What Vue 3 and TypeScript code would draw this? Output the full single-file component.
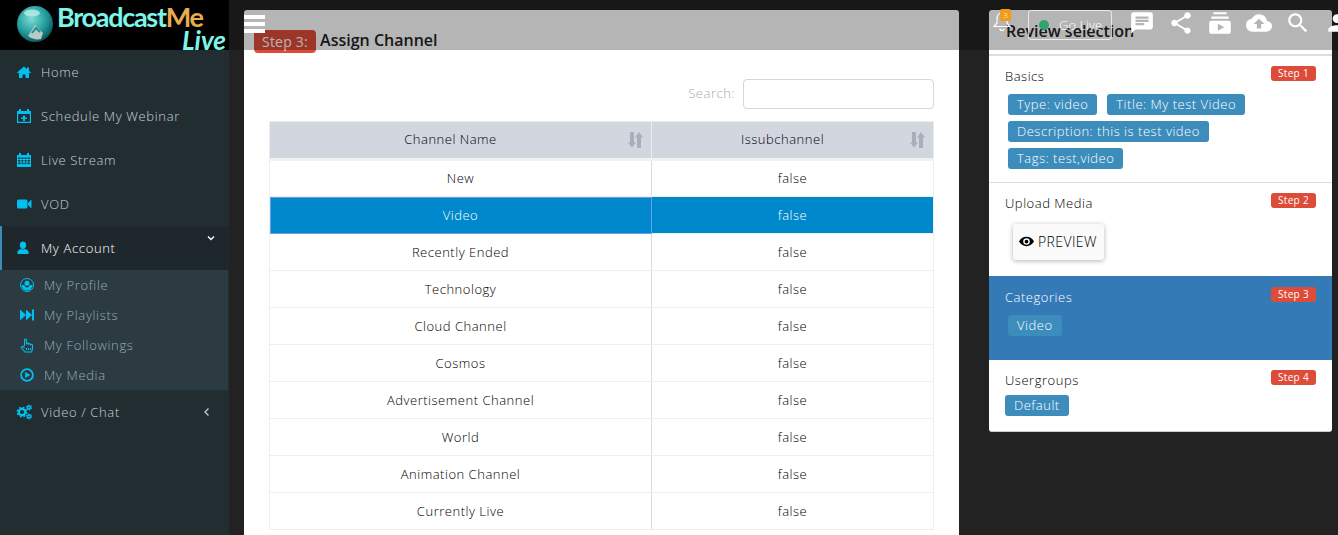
<script setup lang="ts">
const menu = [
  { label: 'Home', icon: 'home' },
  { label: 'Schedule My Webinar', icon: 'calplus' },
  { label: 'Live Stream', icon: 'cal' },
  { label: 'VOD', icon: 'video' },
]
const subMenu = [
  { label: 'My Profile', icon: 'profile' },
  { label: 'My Playlists', icon: 'forward' },
  { label: 'My Followings', icon: 'hand' },
  { label: 'My Media', icon: 'play' },
]
const channels = [
  'New',
  'Video',
  'Recently Ended',
  'Technology',
  'Cloud Channel',
  'Cosmos',
  'Advertisement Channel',
  'World',
  'Animation Channel',
  'Currently Live',
]
const basics = ['Type: video', 'Title: My test Video', 'Description: this is test video', 'Tags: test,video']
</script>

<template>
  <div class="page">
    <aside class="sidebar">
      <div class="logo">
        <svg class="globe" width="36" height="36" viewBox="0 0 36 36">
          <defs>
            <radialGradient id="gl" cx="40%" cy="35%" r="70%">
              <stop offset="0" stop-color="#7fdcd6" />
              <stop offset="0.6" stop-color="#1f9c9c" />
              <stop offset="1" stop-color="#0c4f55" />
            </radialGradient>
          </defs>
          <circle cx="18" cy="18" r="18" fill="url(#gl)" />
          <path d="M11 30l7-11 8 8-2 6c-4 1-9 0-13-3z" fill="#b9c9c6" />
          <path d="M15 27l4-5 4 4" fill="none" stroke="#1f8f90" stroke-width="2" />
          <ellipse cx="15" cy="7" rx="8" ry="3.5" fill="#c9f3ee" opacity=".7" />
        </svg>
        <div class="logo-text">
          <div class="logo-top">Broadcast<span class="logo-me">Me</span></div>
          <div class="logo-live">Live</div>
        </div>
      </div>
      <nav class="menu">
        <a v-for="m in menu" :key="m.label" class="item">
          <svg class="ico" viewBox="1 1 14 14">
            <path v-if="m.icon === 'home'" d="M8 2.500 1 8.500l.8 1L3 8.500V14h3.500v-3.500h3V14H13V8.500l1.200 1 .8-1-2-1.700V3.500h-2v1.600z" />
            <path v-else-if="m.icon === 'calplus'" fill-rule="evenodd" d="M3 1h2v2h6V1h2v2h2v12H1V3h2zm-.8 5v7.800h11.600V6zM7 7.500h2v2h2v1.500H9v2H7v-2H5V9.500h2z" />
            <path v-else-if="m.icon === 'cal'" fill-rule="evenodd" d="M3 1h2v2h6V1h2v2h2v12H1V3h2zm-.8 4.500V7h2.300V5.500zm3.300 0V7h2V5.500zm3 0V7h2V5.500zm3 0V7h2.300V5.500zm-9.300 2.500v1.500h2.300V8zm3.300 0v1.500h2V8zm3 0v1.500h2V8zm3 0v1.500h2.300V8zm-9.300 2.500V12h2.300v-1.500zm3.300 0V12h2v-1.500zm3 0V12h2v-1.500zm3 0V12h2.300v-1.500z" />
            <path v-else d="M2.500 3.500h7.500a1.500 1.500 0 0 1 1.500 1.500v6a1.500 1.500 0 0 1-1.500 1.500H2.500A1.500 1.500 0 0 1 1 11V5a1.500 1.500 0 0 1 1.500-1.500zM12 7l3-3h.500v8H15l-3-3z" />
          </svg>
          <span>{{ m.label }}</span>
        </a>
        <a class="item active">
          <svg class="ico" viewBox="1 1 14 14">
            <path d="M7 1.500c2 0 3.200 1.500 3.200 3.500S9 9 7 9 3.800 7 3.800 5 5 1.500 7 1.500zM1.500 14v-2c0-1.500 1.500-2.500 3.500-3 .8.600 3.200.600 4 0 2 .5 3.500 1.500 3.500 3v2z" />
          </svg>
          <span>My Account</span>
          <svg class="chev down" width="10" height="10" viewBox="0 0 10 10">
            <path d="M2 3.500 5 6.500 8 3.500" fill="none" stroke="#fff" stroke-width="1.400" />
          </svg>
        </a>
        <div class="sub">
          <a v-for="s in subMenu" :key="s.label" class="sub-item">
            <svg class="ico" viewBox="1 1 14 14">
              <template v-if="s.icon === 'profile'">
                <circle cx="8" cy="8" r="6.500" fill="none" stroke="#00c0ef" stroke-width="1" />
                <circle cx="8" cy="6.200" r="2.500" />
                <path d="M2.500 8h2.700c.6 1.600 1.700 2.400 2.800 2.400s2.200-.8 2.800-2.400h2.700a5.500 5.500 0 0 1-11 0z" />
              </template>
              <path v-else-if="s.icon === 'forward'" d="M1 2.500l6 5.500V2.500l6 5.500V2.500h2v11h-2V8l-6 5.500V8l-6 5.500z" />
              <path v-else-if="s.icon === 'hand'" fill="none" stroke="#00c0ef" stroke-width="1.100" d="M5.500 9V3a1 1 0 0 1 2 0v4.500m0-.5a1 1 0 0 1 2 0v1m0-.5a1 1 0 0 1 2 0v1m0-.2a1 1 0 0 1 2 0V12l-1 3H6l-3.500-4c-.8-1 .5-2.200 1.500-1.500L5.500 11M7.500 11v2M9.500 11v2M11.500 11v2" />
              <path v-else fill-rule="evenodd" d="M8 1.200a6.800 6.800 0 1 1 0 13.600A6.800 6.800 0 0 1 8 1.200zm0 1.800a5 5 0 1 0 0 10A5 5 0 0 0 8 3zM6.200 5l5 3-5 3z" />
            </svg>
            <span>{{ s.label }}</span>
          </a>
        </div>
        <a class="item last">
          <svg class="ico gears" viewBox="1 1 14 14">
            <circle class="gear-ring" cx="6" cy="8" r="3.200" />
            <circle class="gear-teeth" cx="6" cy="8" r="4.600" />
            <circle class="gear-ring small" cx="13" cy="3.500" r="1.500" />
            <circle class="gear-teeth small" cx="13" cy="3.500" r="2.500" />
            <circle class="gear-ring small" cx="13" cy="12.500" r="1.500" />
            <circle class="gear-teeth small" cx="13" cy="12.500" r="2.500" />
          </svg>
          <span>Video / Chat</span>
          <svg class="chev" width="10" height="10" viewBox="0 0 10 10">
            <path d="M6.500 1.500 3 5l3.500 3.500" fill="none" stroke="#b8c7ce" stroke-width="1.400" />
          </svg>
        </a>
      </nav>
    </aside>

    <main class="content">
      <section class="card wizard">
        <h3 class="card-title"><span class="step-tag">Step 3:</span> Assign Channel</h3>
        <div class="search">
          <label>Search:</label>
          <input type="text" />
        </div>
        <table class="grid">
          <thead>
            <tr>
              <th>
                Channel Name
                <svg class="sort" width="15" height="16" viewBox="0 0 15 16"><path d="M2 0h4v10.500h2L4 15.500 0 10.500h2zM11 0l4 5.500h-2V16H9V5.500H7z" /></svg>
              </th>
              <th>
                Issubchannel
                <svg class="sort" width="15" height="16" viewBox="0 0 15 16"><path d="M2 0h4v10.500h2L4 15.500 0 10.500h2zM11 0l4 5.500h-2V16H9V5.500H7z" /></svg>
              </th>
            </tr>
          </thead>
          <tbody>
            <tr v-for="c in channels" :key="c" :class="{ picked: c === 'Video' }">
              <td>{{ c }}</td>
              <td>false</td>
            </tr>
          </tbody>
        </table>
      </section>

      <section class="card review">
        <h3 class="review-title">Review selection</h3>
        <div class="group">
          <span class="step">Step 1</span>
          <h4>Basics</h4>
          <div class="tags indent">
            <span v-for="b in basics" :key="b" class="tag">{{ b }}</span>
          </div>
        </div>
        <div class="group upload">
          <span class="step">Step 2</span>
          <h4>Upload Media</h4>
          <button class="preview">
            <svg width="15" height="15" viewBox="0 0 16 16"><path fill-rule="evenodd" d="M8 3c3.500 0 6.500 2.200 8 5-1.500 2.800-4.500 5-8 5s-6.500-2.200-8-5c1.500-2.800 4.500-5 8-5zm0 1.500a3.500 3.500 0 1 0 0 7 3.500 3.500 0 0 0 0-7zM8 6a2 2 0 1 1 0 4 2 2 0 0 1 0-4z" /></svg>
            PREVIEW
          </button>
        </div>
        <div class="group current">
          <span class="step">Step 3</span>
          <h4>Categories</h4>
          <div class="tags indent"><span class="tag">Video</span></div>
        </div>
        <div class="group last-group">
          <span class="step">Step 4</span>
          <h4>Usergroups</h4>
          <div class="tags"><span class="tag">Default</span></div>
        </div>
      </section>
    </main>

    <header class="topbar">
      <div class="burger"><i></i><i></i><i></i></div>
      <div class="top-right">
        <div class="bell">
          <svg width="18" height="22" viewBox="0 0 18 22"><path d="M9 3c3.500 0 5 2.800 5 6v4l3 3.500H1L4 13V9c0-3.200 1.500-6 5-6zM7 18.500a2 2 0 0 0 4 0" fill="none" stroke="#fff" stroke-width="1.200" /></svg>
          <span class="badge">3</span>
        </div>
        <button class="golive"><i class="dot"></i>Go Live</button>
        <svg class="t-ico" width="26" height="26" viewBox="0 0 24 24"><path fill-rule="evenodd" d="M20 2H4c-1.100 0-2 .9-2 2v18l4-4h14c1.100 0 2-.9 2-2V4c0-1.100-.9-2-2-2zM6 9h12v2H6zm8 5H6v-2h8zm4-6H6V6h12z" fill="#fff" /></svg>
        <svg class="t-ico" width="26" height="26" viewBox="0 0 24 24"><path d="M18 16.080c-.76 0-1.440.3-1.960.77L8.910 12.700c.05-.23.090-.46.090-.7s-.04-.47-.09-.7l7.050-4.110c.54.5 1.250.81 2.040.81 1.660 0 3-1.340 3-3s-1.340-3-3-3-3 1.340-3 3c0 .24.040.47.090.7L8.040 9.810C7.500 9.310 6.790 9 6 9c-1.660 0-3 1.340-3 3s1.340 3 3 3c.79 0 1.500-.31 2.040-.81l7.120 4.160c-.05.21-.08.43-.08.65 0 1.610 1.310 2.920 2.920 2.920 1.610 0 2.920-1.310 2.920-2.920s-1.310-2.920-2.920-2.920z" fill="#fff" /></svg>
        <svg class="t-ico" width="26" height="26" viewBox="0 0 24 24"><path fill-rule="evenodd" d="M20 8H4V6h16v2zm-2-6H6v2h12V2zm4 10v8c0 1.100-.9 2-2 2H4c-1.100 0-2-.9-2-2v-8c0-1.100.9-2 2-2h16c1.100 0 2 .9 2 2zm-6 4l-6-3.270v6.530L16 16z" fill="#fff" /></svg>
        <svg class="t-ico" width="26" height="26" viewBox="0 0 24 24"><path d="M19.350 10.040C18.670 6.590 15.640 4 12 4 9.110 4 6.600 5.640 5.350 8.040 2.340 8.360 0 10.910 0 14c0 3.310 2.690 6 6 6h13c2.760 0 5-2.240 5-5 0-2.640-2.050-4.780-4.650-4.960zM14 13v4h-4v-4H7l5-5 5 5z" fill="#fff" /></svg>
        <svg class="t-ico" width="26" height="26" viewBox="0 0 24 24"><path d="M15.500 14h-.79l-.28-.27C15.410 12.590 16 11.110 16 9.500 16 5.910 13.090 3 9.500 3S3 5.910 3 9.500 5.910 16 9.500 16c1.610 0 3.090-.59 4.230-1.570l.27.28v.79l5 4.990L20.490 19zm-6 0C7.010 14 5 11.990 5 9.500S7.010 5 9.500 5 14 7.010 14 9.500 11.990 14 9.500 14z" fill="#fff" /></svg>
        <svg class="t-ico" width="26" height="26" viewBox="0 0 24 24"><path d="M12 12c2.210 0 4-1.790 4-4s-1.790-4-4-4-4 1.790-4 4 1.790 4 4 4zm0 2c-2.670 0-8 1.340-8 4v2h16v-2c0-2.660-5.330-4-8-4z" fill="#fff" /></svg>
      </div>
    </header>
  </div>
</template>

<style>
html, body {
  margin: 0;
  height: 100%;
  overflow: hidden;
  background: #222;
}
</style>

<style scoped>
* {
  box-sizing: border-box;
}
.page {
  position: relative;
  display: flex;
  width: 1338px;
  height: 535px;
  overflow: hidden;
  background: #222;
  font-family: "Open Sans", "Liberation Sans", sans-serif;
  font-size: 13px;
  font-weight: 300;
  letter-spacing: 0.52px;
  color: #333;
}
.sidebar {
  width: 229px;
  flex: none;
  background: #222d32;
}
.menu {
  letter-spacing: 0.65px;
}
.logo {
  display: flex;
  height: 50px;
  padding: 6px 0 0 17px;
  background: #000;
}
.globe {
  flex: none;
}
.logo-text {
  width: 169px;
  margin-left: 4px;
  flex: none;
  font-family: Lato, "Liberation Sans", sans-serif;
  font-weight: 700;
  letter-spacing: 0;
  color: #7df5e8;
}
.logo-top {
  margin-top: -3px;
  font-size: 27px;
  line-height: 28px;
  letter-spacing: -1.3px;
  white-space: nowrap;
}
.logo-me {
  color: #e8ac50;
}
.logo-live {
  margin-top: -1px;
  text-align: right;
  font-size: 26px;
  line-height: 20px;
  font-style: italic;
}
.item {
  position: relative;
  display: flex;
  align-items: center;
  height: 44px;
  padding-left: 17px;
  color: #c5d2d8;
}
.item.active {
  background: #1e282c;
  color: #fff;
  border-left: 2px solid #3c8dbc;
  padding-left: 15px;
}
.ico {
  flex: none;
  width: 14px;
  height: 14px;
  margin-right: 10px;
  fill: #00c0ef;
  overflow: visible;
}
.gear-ring {
  fill: none;
  stroke: #00c0ef;
  stroke-width: 2.200;
}
.gear-ring.small {
  stroke-width: 1.400;
}
.gear-teeth {
  fill: none;
  stroke: #00c0ef;
  stroke-width: 1.600;
  stroke-dasharray: 2 1.610;
}
.gear-teeth.small {
  stroke-width: 1.100;
  stroke-dasharray: 1.300 1.320;
}
.chev {
  position: absolute;
  right: 17px;
  top: 17px;
}
.chev.down {
  top: 7px;
  right: 13px;
}
.sub {
  background: #2c3b41;
  width: 228px;
}
.sub-item {
  display: flex;
  align-items: center;
  height: 30px;
  padding-left: 20px;
  color: #94adb8;
}
.content {
  flex: 1;
  display: flex;
  align-items: flex-start;
  padding: 10px 6px 0 15px;
  gap: 30px;
}
.card {
  background: #fff;
  border-radius: 3px;
}
.wizard {
  width: 715px;
  height: 540px;
  padding: 0 25px;
}
.card-title {
  height: 40px;
  margin: 0 0 0 -15px;
  padding: 20px 0 0;
  font-size: 16px;
  font-weight: 600;
  letter-spacing: 0;
  line-height: 20px;
  color: #222;
}
.step-tag {
  display: inline-block;
  height: 23px;
  padding: 0 8px;
  border-radius: 4px;
  background: #dd4b39;
  color: #fff;
  font-size: 14px;
  font-weight: 400;
  line-height: 23px;
  letter-spacing: 0.22px;
  vertical-align: -1px;
}
.search {
  display: flex;
  justify-content: flex-end;
  align-items: center;
  gap: 8px;
  margin-top: 29px;
  color: #aaa;
}
.search label {
  padding-bottom: 2px;
}
.search input {
  width: 191px;
  height: 30px;
  padding: 0;
  border: 1px solid #d2d6de;
  border-radius: 4px;
  background: #fff;
}
.grid {
  width: 665px;
  margin-top: 12px;
  border-collapse: collapse;
  table-layout: fixed;
}
.grid th {
  position: relative;
  height: 38px;
  padding: 0 20px 2px 0;
  background: #d2d6df;
  border: 1px solid #e9ebef;
  border-bottom: 3px solid #f1f1f1;
  font-weight: 300;
  color: #000;
}
.grid th:first-child {
  width: 382px;
}
.grid td {
  height: 37px;
  padding: 0;
  border: 1px solid #eee;
  text-align: center;
  color: #000;
}
.grid tbody tr:first-child td {
  padding-bottom: 2px;
}
.grid td:first-child {
  border-right: 1px solid #d8dbe2;
}
.grid .picked td {
  background: #0088cc;
  color: #fff;
}
.grid .picked td:first-child {
  outline: 1px solid #6d9eeb;
  outline-offset: -1px;
}
.sort {
  position: absolute;
  right: 8px;
  top: 10px;
  fill: #a9afb8;
}
.review {
  width: 343px;
  height: 422px;
  border-bottom: 1px solid #ccc;
}
.review-title {
  height: 46px;
  margin: 0;
  padding: 10px 0 0 17px;
  font-size: 16px;
  font-weight: 600;
  letter-spacing: 0;
  color: #222;
  border-bottom: 2px solid #ddd;
}
.group {
  position: relative;
  height: 127px;
  padding: 11px 16px 0;
  border-bottom: 1px solid #ddd;
}
.group h4 {
  margin: 0;
  font-size: 13px;
  line-height: 18px;
  font-weight: 300;
  color: #000;
}
.step {
  position: absolute;
  top: 10px;
  right: 16px;
  width: 45px;
  height: 15px;
  border-radius: 3px;
  background: #dd4b39;
  color: #fff;
  font-size: 10px;
  font-weight: 400;
  line-height: 15px;
  letter-spacing: 0.3px;
  text-align: center;
}
.tags {
  display: flex;
  flex-wrap: wrap;
  gap: 6px 10px;
  margin-top: 9px;
}
.tags.indent {
  padding-left: 3px;
}
.tag {
  height: 21px;
  padding: 0 9px;
  border-radius: 3px;
  background: #3c8dbc;
  color: #fff;
  line-height: 21px;
  white-space: nowrap;
}
.upload {
  height: 93px;
  border-bottom: none;
}
.preview {
  display: flex;
  align-items: center;
  gap: 4px;
  width: 91px;
  height: 36px;
  margin: 12px 0 0 8px;
  padding: 0 0 2px 6px;
  border: none;
  border-radius: 3px;
  background: #fafafa;
  box-shadow: 0 1px 5px rgba(0, 0, 0, 0.3);
  font: inherit;
  font-size: 14px;
  letter-spacing: 0.4px;
  color: #000;
}
.current {
  height: 84px;
  padding-top: 12px;
  background: #337ab7;
  border-bottom: none;
}
.current .step {
  top: 11px;
}
.current h4 {
  color: #fff;
}
.last-group {
  height: 71px;
  border-bottom: none;
}
.last-group .tags {
  margin-top: 6px;
}
.topbar {
  position: absolute;
  top: 0;
  left: 228px;
  right: 0;
  height: 50px;
  background: rgba(0, 0, 0, 0.29);
}
.burger {
  position: absolute;
  left: 16px;
  top: 15px;
  display: flex;
  flex-direction: column;
  gap: 3px;
}
.burger i {
  display: block;
  width: 21px;
  height: 4px;
  background: #fff;
}
.top-right {
  position: absolute;
  left: 765px;
  top: 10px;
  display: flex;
  align-items: flex-start;
  gap: 13px;
}
.bell {
  position: relative;
  width: 18px;
  height: 22px;
}
.badge {
  position: absolute;
  left: 7px;
  top: -1px;
  width: 11px;
  height: 12px;
  border-radius: 2px;
  background: #f39c12;
  color: #fff;
  font-size: 8px;
  line-height: 12px;
  text-align: center;
  letter-spacing: 0;
}
.golive {
  display: flex;
  align-items: center;
  width: 84px;
  height: 30px;
  margin: 0 4px;
  padding: 0 0 0 10px;
  border: 1px solid rgba(255, 255, 255, 0.7);
  border-radius: 3px;
  background: transparent;
  font: inherit;
  color: #fff;
}
.dot {
  width: 10px;
  height: 10px;
  margin-right: 10px;
  border-radius: 50%;
  background: #31a36f;
}
.t-ico {
  flex: none;
}
</style>
